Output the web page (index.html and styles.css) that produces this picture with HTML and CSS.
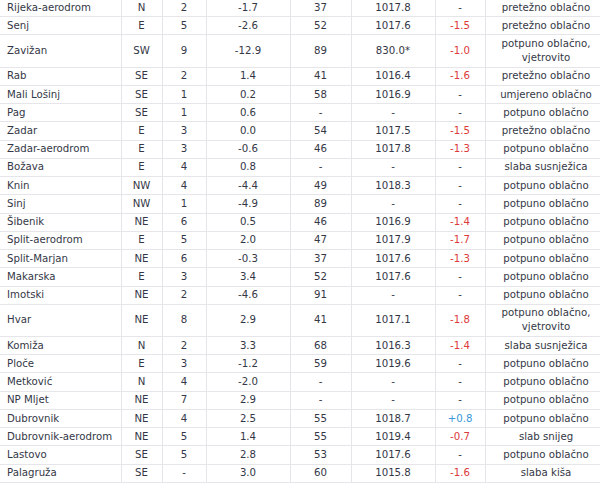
FILE: index.html
```html
<!DOCTYPE html>
<html lang="hr">
<head>
<meta charset="utf-8">
<title>Vrijeme</title>
<link rel="stylesheet" href="styles.css">
</head>
<body>
<table class="wx">
<colgroup>
<col class="c-name"><col class="c-dir"><col class="c-spd"><col class="c-temp"><col class="c-hum"><col class="c-pres"><col class="c-tend"><col class="c-desc">
</colgroup>
<tbody>
<tr><td>Rijeka-aerodrom</td><td>N</td><td>2</td><td>-1.7</td><td>37</td><td>1017.8</td><td>-</td><td>pretežno oblačno</td></tr>
<tr><td>Senj</td><td>E</td><td>5</td><td>-2.6</td><td>52</td><td>1017.6</td><td class="neg">-1.5</td><td>pretežno oblačno</td></tr>
<tr><td>Zavižan</td><td>SW</td><td>9</td><td>-12.9</td><td>89</td><td>830.0*</td><td class="neg">-1.0</td><td>potpuno oblačno,<br>vjetrovito</td></tr>
<tr><td>Rab</td><td>SE</td><td>2</td><td>1.4</td><td>41</td><td>1016.4</td><td class="neg">-1.6</td><td>pretežno oblačno</td></tr>
<tr><td>Mali Lošinj</td><td>SE</td><td>1</td><td>0.2</td><td>58</td><td>1016.9</td><td>-</td><td>umjereno oblačno</td></tr>
<tr><td>Pag</td><td>SE</td><td>1</td><td>0.6</td><td>-</td><td>-</td><td>-</td><td>potpuno oblačno</td></tr>
<tr><td>Zadar</td><td>E</td><td>3</td><td>0.0</td><td>54</td><td>1017.5</td><td class="neg">-1.5</td><td>pretežno oblačno</td></tr>
<tr><td>Zadar-aerodrom</td><td>E</td><td>3</td><td>-0.6</td><td>46</td><td>1017.8</td><td class="neg">-1.3</td><td>potpuno oblačno</td></tr>
<tr><td>Božava</td><td>E</td><td>4</td><td>0.8</td><td>-</td><td>-</td><td>-</td><td>slaba susnježica</td></tr>
<tr><td>Knin</td><td>NW</td><td>4</td><td>-4.4</td><td>49</td><td>1018.3</td><td>-</td><td>potpuno oblačno</td></tr>
<tr><td>Sinj</td><td>NW</td><td>1</td><td>-4.9</td><td>89</td><td>-</td><td>-</td><td>potpuno oblačno</td></tr>
<tr><td>Šibenik</td><td>NE</td><td>6</td><td>0.5</td><td>46</td><td>1016.9</td><td class="neg">-1.4</td><td>potpuno oblačno</td></tr>
<tr><td>Split-aerodrom</td><td>E</td><td>5</td><td>2.0</td><td>47</td><td>1017.9</td><td class="neg">-1.7</td><td>potpuno oblačno</td></tr>
<tr><td>Split-Marjan</td><td>NE</td><td>6</td><td>-0.3</td><td>37</td><td>1017.6</td><td class="neg">-1.3</td><td>potpuno oblačno</td></tr>
<tr><td>Makarska</td><td>E</td><td>3</td><td>3.4</td><td>52</td><td>1017.6</td><td>-</td><td>potpuno oblačno</td></tr>
<tr><td>Imotski</td><td>NE</td><td>2</td><td>-4.6</td><td>91</td><td>-</td><td>-</td><td>potpuno oblačno</td></tr>
<tr><td>Hvar</td><td>NE</td><td>8</td><td>2.9</td><td>41</td><td>1017.1</td><td class="neg">-1.8</td><td>potpuno oblačno,<br>vjetrovito</td></tr>
<tr><td>Komiža</td><td>N</td><td>2</td><td>3.3</td><td>68</td><td>1016.3</td><td class="neg">-1.4</td><td>slaba susnježica</td></tr>
<tr><td>Ploče</td><td>E</td><td>3</td><td>-1.2</td><td>59</td><td>1019.6</td><td>-</td><td>potpuno oblačno</td></tr>
<tr><td>Metković</td><td>N</td><td>4</td><td>-2.0</td><td>-</td><td>-</td><td>-</td><td>potpuno oblačno</td></tr>
<tr><td>NP Mljet</td><td>NE</td><td>7</td><td>2.9</td><td>-</td><td>-</td><td>-</td><td>potpuno oblačno</td></tr>
<tr><td>Dubrovnik</td><td>NE</td><td>4</td><td>2.5</td><td>55</td><td>1018.7</td><td class="pos">+0.8</td><td>potpuno oblačno</td></tr>
<tr><td>Dubrovnik-aerodrom</td><td>NE</td><td>5</td><td>1.4</td><td>55</td><td>1019.4</td><td class="neg">-0.7</td><td>slab snijeg</td></tr>
<tr><td>Lastovo</td><td>SE</td><td>5</td><td>2.8</td><td>53</td><td>1017.6</td><td>-</td><td>potpuno oblačno</td></tr>
<tr><td>Palagruža</td><td>SE</td><td>-</td><td>3.0</td><td>60</td><td>1015.8</td><td class="neg">-1.6</td><td>slaba kiša</td></tr>
</tbody>
</table>
</body>
</html>
```
FILE: styles.css
```css
html, body {
  margin: 0;
  padding: 0;
  background: #ffffff;
  overflow: hidden;
}

.wx {
  margin-top: -1px;
  width: 607px;
  table-layout: fixed;
  border-collapse: collapse;
  font-family: "DejaVu Sans", Verdana, sans-serif;
  font-size: 10.2px;
  color: #343746;
}

.c-name { width: 121px; }
.c-dir { width: 41px; }
.c-spd { width: 44px; }
.c-temp { width: 84px; }
.c-hum { width: 61px; }
.c-pres { width: 84px; }
.c-tend { width: 50px; }
.c-desc { width: 122px; }

.wx td {
  line-height: 14px;
  padding: 1.6px 0 1.65px;
  text-align: center;
  white-space: nowrap;
  border-bottom: 1px solid #e6e6ea;
  border-right: 1px solid #e6e6ea;
}

.wx td:first-child {
  text-align: left;
  padding-left: 7px;
}

.wx td.neg { color: #dc3a3a; }
.wx td.pos { color: #3a98d8; }
```
